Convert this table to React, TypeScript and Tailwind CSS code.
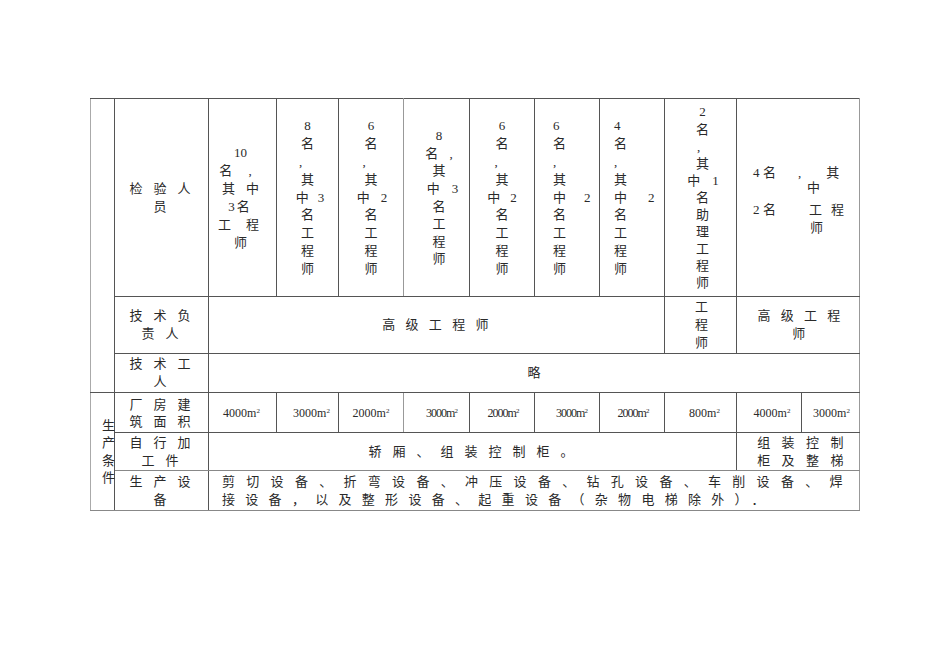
import React from "react";

const B = "border border-[#555] p-0 align-middle";

function Label({ a, b, lead = "leading-[18px]" }: { a: string; b: string; lead?: string }) {
  return (
    <div className={`flex flex-col items-center text-[13px] ${lead}`}>
      <div className="tracking-[11px] pl-[8px] whitespace-nowrap">{a}</div>
      <div className="tracking-[11px] pl-[8px] whitespace-nowrap">{b}</div>
    </div>
  );
}

function Area({ v, cls = "" }: { v: string; cls?: string }) {
  return (
    <div className={`text-[12px] text-center whitespace-nowrap ${cls}`}>
      {v}m<sup className="text-[7px]">2</sup>
    </div>
  );
}

function Stack({ items, cls }: { items: React.ReactNode[]; cls: string }) {
  return (
    <div className={`flex flex-col text-[13px] whitespace-nowrap ${cls}`}>
      {items.map((it, i) => (
        <div key={i}>{it}</div>
      ))}
    </div>
  );
}

export default function App() {
  return (
    <div className="min-h-[672px] w-[950px] bg-white pt-[98px] pl-[90px] text-[#2a2a2a] font-['Liberation_Serif','Noto_Sans_CJK_SC',serif]">
      <table className="table-fixed border-collapse w-[770px]">
        <colgroup>
          <col className="w-[24px]" />
          <col className="w-[94px]" />
          <col className="w-[68px]" />
          <col className="w-[62px]" />
          <col className="w-[65px]" />
          <col className="w-[66px]" />
          <col className="w-[65px]" />
          <col className="w-[65px]" />
          <col className="w-[65px]" />
          <col className="w-[72px]" />
          <col className="w-[65px]" />
          <col className="w-[58px]" />
        </colgroup>
        <tbody>
          {/* Row 1 */}
          <tr className="h-[198px]">
            <td rowSpan={3} className={`${B} border-l-[#aaa]`}></td>
            <td className={B}>
              <Label a="检验人" b="员" />
            </td>
            <td className={B}>
              <div className="flex flex-col items-center text-[13px] leading-[18px] pr-[4px] whitespace-nowrap">
                <div>10</div>
                <div className="flex gap-[16px] mr-[10px]"><span>名</span><span>,</span></div>
                <div className="flex gap-[11px]"><span>其</span><span>中</span></div>
                <div className="flex gap-[2px] mr-[3px]"><span>3</span><span>名</span></div>
                <div className="flex gap-[15px] mr-[4px]"><span>工</span><span>程</span></div>
                <div>师</div>
              </div>
            </td>
            <td className={B}>
              <div className="flex flex-col items-center text-[13px] leading-[17.8px] whitespace-nowrap">
                <div>8</div>
                <div>名</div>
                <div className="mr-[14px]">,</div>
                <div>其</div>
                <div className="flex gap-[9px] ml-[5px]"><span>中</span><span>3</span></div>
                <div>名</div>
                <div>工</div>
                <div>程</div>
                <div>师</div>
              </div>
            </td>
            <td className={`${B} border-r-[#999]`}>
              <div className="flex flex-col items-center text-[13px] leading-[17.8px] whitespace-nowrap">
                <div>6</div>
                <div>名</div>
                <div className="mr-[14px]">,</div>
                <div>其</div>
                <div className="flex gap-[11px] ml-[2px]"><span>中</span><span>2</span></div>
                <div>名</div>
                <div>工</div>
                <div>程</div>
                <div>师</div>
              </div>
            </td>
            <td className={B}>
              <div className="flex flex-col items-center text-[13px] leading-[17.6px] pl-[5px] whitespace-nowrap">
                <div>8</div>
                <div className="flex gap-[11px]"><span>名</span><span>,</span></div>
                <div>其</div>
                <div className="flex gap-[12px] ml-[7px]"><span>中</span><span>3</span></div>
                <div>名</div>
                <div>工</div>
                <div>程</div>
                <div>师</div>
              </div>
            </td>
            <td className={B}>
              <div className="flex flex-col items-center text-[13px] leading-[17.8px] whitespace-nowrap">
                <div>6</div>
                <div>名</div>
                <div className="mr-[12px]">,</div>
                <div>其</div>
                <div className="flex gap-[10px]"><span>中</span><span>2</span></div>
                <div>名</div>
                <div>工</div>
                <div>程</div>
                <div>师</div>
              </div>
            </td>
            <td className={B}>
              <div className="flex flex-col items-start text-[13px] leading-[17.8px] pl-[18px] whitespace-nowrap">
                <div>6</div>
                <div>名</div>
                <div>,</div>
                <div>其</div>
                <div className="flex gap-[18px]"><span>中</span><span>2</span></div>
                <div>名</div>
                <div>工</div>
                <div>程</div>
                <div>师</div>
              </div>
            </td>
            <td className={B}>
              <div className="flex flex-col items-start text-[13px] leading-[17.8px] pl-[14px] whitespace-nowrap">
                <div>4</div>
                <div>名</div>
                <div>,</div>
                <div>其</div>
                <div className="flex gap-[21px]"><span>中</span><span>2</span></div>
                <div>名</div>
                <div>工</div>
                <div>程</div>
                <div>师</div>
              </div>
            </td>
            <td className={B}>
              <div className="flex flex-col items-center text-[13px] leading-[17.1px] pl-[4px] whitespace-nowrap">
                <div>2</div>
                <div>名</div>
                <div className="mr-[8px]">,</div>
                <div>其</div>
                <div className="flex gap-[12px] ml-[1px]"><span>中</span><span>1</span></div>
                <div>名</div>
                <div>助</div>
                <div>理</div>
                <div>工</div>
                <div>程</div>
                <div>师</div>
              </div>
            </td>
            <td colSpan={2} className={`${B} border-r-[#999]`}>
              <div className="flex flex-col items-start text-[13px] pl-[16px] pt-[6px] whitespace-nowrap">
                <div className="flex leading-[15px]">
                  <span>4</span>
                  <span className="ml-[3.5px]">名</span>
                  <span className="ml-[22px]">,</span>
                  <span className="ml-[25px]">其</span>
                </div>
                <div className="leading-[15px] ml-[54px]">中</div>
                <div className="flex leading-[18px] mt-[6px]">
                  <span>2</span>
                  <span className="ml-[3.5px]">名</span>
                  <span className="ml-[33px]">工</span>
                  <span className="ml-[9px]">程</span>
                </div>
                <div className="leading-[18px] ml-[57px]">师</div>
              </div>
            </td>
          </tr>

          {/* Row 2 */}
          <tr className="h-[57px]">
            <td className={B}>
              <Label a="技术负" b="责人" />
            </td>
            <td colSpan={7} className={B}>
              <div className="text-center text-[13px] tracking-[10.3px] pl-[8px] whitespace-nowrap">高级工程师</div>
            </td>
            <td className={B}>
              <Stack items={["工", "程", "师"]} cls="items-center leading-[18px] pl-[2px]" />
            </td>
            <td colSpan={2} className={`${B} border-r-[#999]`}>
              <div className="flex flex-col items-center text-[13px] leading-[18px] whitespace-nowrap">
                <div className="tracking-[10.3px] pl-[12px]">高级工程</div>
                <div className="tracking-[10.3px] pl-[12px]">师</div>
              </div>
            </td>
          </tr>

          {/* Row 3 */}
          <tr className="h-[39px]">
            <td className={B}>
              <Label a="技术工" b="人" />
            </td>
            <td colSpan={10} className={`${B} border-r-[#999]`}>
              <div className="text-center text-[13px]">略</div>
            </td>
          </tr>

          {/* Row 4 */}
          <tr className="h-[40px]">
            <td rowSpan={3} className={`${B} border-l-[#aaa] border-b-[#888]`}>
              <Stack items={["生", "产", "条", "件"]} cls="items-start leading-[17.3px] pl-[11px]" />
            </td>
            <td className={B}>
              <Label a="厂房建" b="筑面积" lead="leading-[17px]" />
            </td>
            <td className={B}><Area v="4000" cls="pr-[2px]" /></td>
            <td className={B}><Area v="3000" cls="pl-[8px]" /></td>
            <td className={`${B} border-r-[#999]`}><Area v="2000" /></td>
            <td className={B}><Area v="3000" cls="pl-[10px] tracking-[-1px]" /></td>
            <td className={B}><Area v="2000" cls="pl-[2px] tracking-[-1px]" /></td>
            <td className={B}><Area v="3000" cls="pl-[9px] tracking-[-1px]" /></td>
            <td className={B}><Area v="2000" cls="pl-[2px] tracking-[-1px]" /></td>
            <td className={B}><Area v="800" cls="pl-[8px]" /></td>
            <td className={B}><Area v="4000" cls="pl-[6px]" /></td>
            <td className={`${B} border-r-[#999]`}><Area v="3000" cls="pl-[2px]" /></td>
          </tr>

          {/* Row 5 */}
          <tr className="h-[38px]">
            <td className={`${B} border-b-[#888]`}>
              <Label a="自行加" b="工件" />
            </td>
            <td colSpan={8} className={`${B} border-b-[#888]`}>
              <div className="text-center text-[13px] tracking-[11px] pl-[8px] whitespace-nowrap">轿厢、组装控制柜。</div>
            </td>
            <td colSpan={2} className={`${B} border-b-[#888] border-r-[#999]`}>
              <div className="flex flex-col items-center text-[13px] leading-[18px] whitespace-nowrap">
                <div className="tracking-[11.4px] pl-[16px]">组装控制</div>
                <div className="tracking-[11.4px] pl-[16px]">柜及整梯</div>
              </div>
            </td>
          </tr>

          {/* Row 6 */}
          <tr className="h-[40px]">
            <td className={`${B} border-b-[#888]`}>
              <Label a="生产设" b="备" />
            </td>
            <td colSpan={10} className={`${B} border-b-[#888] border-r-[#999]`}>
              <div className="flex flex-col text-[13px] leading-[18px] pl-[13px] whitespace-nowrap">
                <div className="tracking-[11.3px]">剪切设备、折弯设备、冲压设备、钻孔设备、车削设备、焊</div>
                <div className="tracking-[10.3px]">接设备，以及整形设备、起重设备（杂物电梯除外）．</div>
              </div>
            </td>
          </tr>
        </tbody>
      </table>
    </div>
  );
}
